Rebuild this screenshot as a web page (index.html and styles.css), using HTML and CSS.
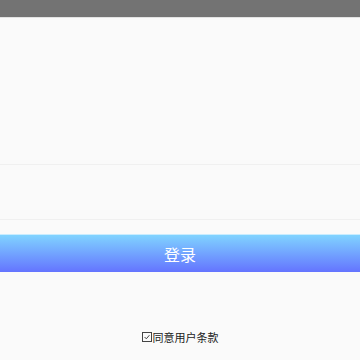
FILE: index.html
```html
<!DOCTYPE html>
<html lang="zh">
<head>
  <meta charset="UTF-8">
  <meta name="viewport" content="width=device-width,initial-scale=1">
  <title>登录</title>
  <link rel="stylesheet" href="styles.css">
</head>
<body>
<div class="status-bar"></div>
<div class="page">
  <div class="form">
    <div class="field"></div>
    <div class="field"></div>
  </div>
  <a href="javascript:" class="login-button">登录</a>
  <label class="agree">
    <svg class="agree-box" width="10" height="10" viewBox="0 0 10 10">
      <rect x="0.5" y="0.5" width="9" height="9" fill="none" stroke="#444" stroke-width="1"/>
      <path d="M2.6 5 L4.3 6.8 L7.4 3.2" fill="none" stroke="#444" stroke-width="1"/>
    </svg>
    <span class="agree-text">同意用户条款</span>
  </label>
</div>
</body>
</html>
```

FILE: styles.css
```css
* {
  margin: 0;
  padding: 0;
  box-sizing: border-box;
}

html, body {
  height: 100%;
}

body {
  background-color: #fafafa;
  font-family: "Noto Sans CJK SC", "Noto Sans", sans-serif;
}

.status-bar {
  height: 18px;
  background-color: #737373;
  border-bottom: 1px solid #e2e2e2;
}

.page {
  display: flex;
  flex-direction: column;
  align-items: center;
}

.form {
  width: 100%;
  padding-top: 92px;
}

.field {
  height: 55px;
  border-bottom: 1px solid #f0f0f0;
}

.login-button {
  display: flex;
  justify-content: center;
  align-items: center;
  width: 100%;
  height: 38px;
  margin-top: 14px;

  font-size: 16px;
  color: white;
  text-decoration: none;
  background: linear-gradient(#80d3ff, #6474ff);
  border-top: 1px solid #c8ecff;
}

.agree {
  display: flex;
  align-items: center;
  margin-top: 57px;

  font-size: 11px;
  color: #222;
}

.agree-box {
  margin-right: 1px;
}
```
